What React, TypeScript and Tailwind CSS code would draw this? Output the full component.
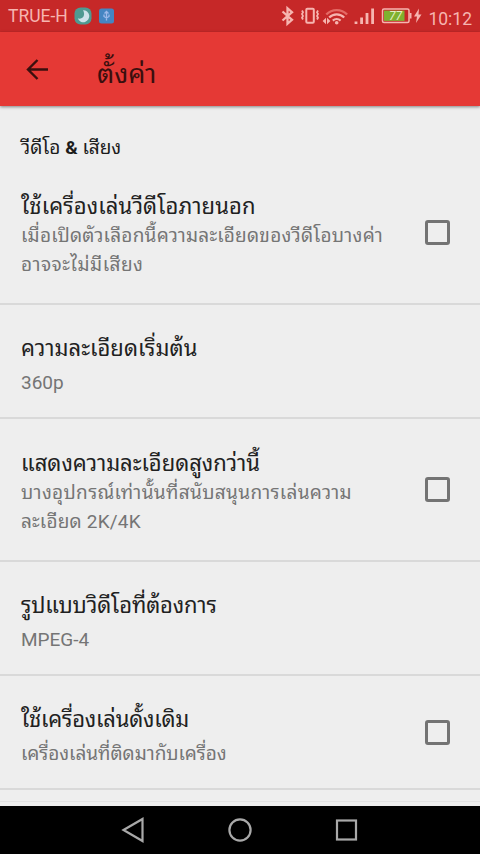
import type { ReactNode } from "react";

type Setting = {
  id: string;
  title: string;
  titleClass: string;
  lines: { text: string; className: string }[];
  checkbox?: boolean;
};

const SETTINGS: Setting[] = [
  {
    id: "external-player",
    title: "ใช้เครื่องเล่นวีดีโอภายนอก",
    titleClass: "tracking-[0.12px]",
    lines: [
      { text: "เมื่อเปิดตัวเลือกนี้ความละเอียดของวีดีโอบางค่า", className: "tracking-[0.22px]" },
      { text: "อาจจะไม่มีเสียง", className: "tracking-[0.5px]" },
    ],
    checkbox: true,
  },
  {
    id: "default-resolution",
    title: "ความละเอียดเริ่มต้น",
    titleClass: "tracking-[0.06px]",
    lines: [{ text: "360p", className: "" }],
  },
  {
    id: "higher-resolution",
    title: "แสดงความละเอียดสูงกว่านี้",
    titleClass: "",
    lines: [
      { text: "บางอุปกรณ์เท่านั้นที่สนับสนุนการเล่นความ", className: "tracking-[0.32px]" },
      { text: "ละเอียด 2K/4K", className: "tracking-[0.2px]" },
    ],
    checkbox: true,
  },
  {
    id: "video-format",
    title: "รูปแบบวิดีโอที่ต้องการ",
    titleClass: "tracking-[-0.12px]",
    lines: [{ text: "MPEG-4", className: "" }],
  },
  {
    id: "legacy-player",
    title: "ใช้เครื่องเล่นดั้งเดิม",
    titleClass: "tracking-[-0.2px]",
    lines: [{ text: "เครื่องเล่นที่ติดมากับเครื่อง", className: "tracking-[-0.05px]" }],
    checkbox: true,
  },
];

function StatusBar() {
  return (
    <div className="flex h-8 items-center bg-[#c62828] text-[#f6b5b0]">
      <span className="ml-2 w-[66px] text-[17.5px] leading-8 whitespace-nowrap">TRUE-H</span>
      <svg className="block" width="42" height="18" viewBox="0 0 42 18">
        <rect x="0.5" y="0.5" width="17" height="17" rx="6" fill="#4f9a91" />
        <path d="M9 3.2A6 6 0 1 1 3.8 11.6C9 12.6 11.8 8 9 3.2z" fill="#cfe3ea" />
        <rect x="25" y="1.5" width="15" height="15" rx="2.5" fill="#4585c2" />
        <path
          d="M32.5 13.5V5M30.5 6.5l2-2 2 2M30 7.5v2l2.5 1.5L35 9.5v-2"
          fill="none"
          stroke="#9db9ea"
          strokeWidth="1.3"
        />
      </svg>
      <svg className="ml-auto block" width="144" height="32" viewBox="0 0 144 32">
        {/* bluetooth */}
        <path d="M4.5 11.5l9.5 8.3-4.5 4V8.2l4.5 4-9.5 8.3" fill="none" stroke="#f6b5b0" strokeWidth="2.3" />
        {/* vibrate */}
        <rect x="28.3" y="8.8" width="7.5" height="14" rx="1" fill="none" stroke="#f6b5b0" strokeWidth="2" />
        <path
          d="M24 10.5l1 1.8-1 1.8 1 1.8-1 1.8 1 1.8M40 10.5l-1 1.8 1 1.8-1 1.8 1 1.8-1 1.8"
          fill="none"
          stroke="#f6b5b0"
          strokeWidth="1.8"
        />
        {/* wifi */}
        <path d="M48.3 14.5a14.5 14.5 0 0 1 20.8 0" fill="none" stroke="#e46a65" strokeWidth="2.4" />
        <path
          d="M51.2 17.6a10.4 10.4 0 0 1 15 0M54.8 20.6a5.8 5.8 0 0 1 7.8 0"
          fill="none"
          stroke="#f6b5b0"
          strokeWidth="2.2"
        />
        <circle cx="58.7" cy="22.8" r="1.8" fill="#f6b5b0" />
        <path d="M44.6 21l3.4-3.2v6.4zM52.4 21L49 17.800v6.400z" fill="#f6b5b0" />
        {/* signal */}
        <path
          d="M78 24v-2.5M83.6 24v-6.5M89 24V13M94.6 24V8.5"
          fill="none"
          stroke="#f6b5b0"
          strokeWidth="2.8"
        />
        {/* battery */}
        <rect x="104.5" y="9" width="26.5" height="13.5" rx="1.5" fill="none" stroke="#f6b5b0" strokeWidth="1.5" />
        <rect x="106" y="10.6" width="20.5" height="10.3" fill="#7fb12f" />
        <path d="M132.5 13v5.5" stroke="#f6b5b0" strokeWidth="2" />
        <text x="117.5" y="20" fontSize="12" fontStyle="italic" textAnchor="middle" fill="#e5efc4">
          77
        </text>
        <path d="M141 8.5l-5 8h3l-1 6.500 5.500-8.500h-3z" fill="#f6b5b0" />
      </svg>
      <span className="mt-1.5 mr-2 ml-[5px] w-[45px] text-right text-[17.5px] leading-7">10:12</span>
    </div>
  );
}

function AppBar() {
  return (
    <header className="relative flex h-[74px] items-center bg-[#e53935] shadow-[0_1px_3px_rgba(0,0,0,0.45)]">
      <button type="button" aria-label="ย้อนกลับ" className="ml-[25px]">
        <svg className="block" width="24" height="24" viewBox="0 0 24 24">
          <path d="M12.5 3L3 12.5 12.5 22M3 12.5H23" fill="none" stroke="#3a0f0e" strokeWidth="2.4" />
        </svg>
      </button>
      <h1 className="mt-2.5 ml-[48px] text-[27px] leading-9 text-[#3a0f0e]">ตั้งค่า</h1>
    </header>
  );
}

function SettingRow({ setting }: { setting: Setting }) {
  const multiline = setting.lines.length > 1;
  return (
    <li
      className={`flex items-center justify-between border-b-2 border-[#d9d9d9] pr-[30px] pl-[21px] ${
        multiline ? "h-[143px]" : "h-[114px]"
      }`}
    >
      <div className={`whitespace-nowrap ${multiline ? "pt-1.5" : "pt-2.5"}`}>
        <h2 className={`text-[22px] leading-[30px] text-[#212121] ${setting.titleClass}`}>{setting.title}</h2>
        <div className={multiline ? "" : "pt-[5px]"}>
          {setting.lines.map((line) => (
            <p key={line.text} className={`text-[19px] leading-[28.5px] text-[#757575] ${line.className}`}>
              {line.text}
            </p>
          ))}
        </div>
      </div>
      {setting.checkbox && (
        <span role="checkbox" aria-checked="false" className="size-[25px] rounded-[3px] border-[3px] border-[#737373]" />
      )}
    </li>
  );
}

function NavButton({ label, children }: { label: string; children: ReactNode }) {
  return (
    <button type="button" aria-label={label}>
      <svg className="block" width="28" height="28" viewBox="0 0 28 28" fill="none" stroke="#a9a9a9" strokeWidth="2.2">
        {children}
      </svg>
    </button>
  );
}

function NavBar() {
  return (
    <nav className="flex h-12 items-center justify-center gap-[79px] bg-black">
      <NavButton label="กลับ">
        <path d="M4.5 14L23.5 3v22z" />
      </NavButton>
      <NavButton label="หน้าหลัก">
        <circle cx="14" cy="14" r="10.6" />
      </NavButton>
      <NavButton label="แอปล่าสุด">
        <rect x="4" y="4.5" width="19" height="19" />
      </NavButton>
    </nav>
  );
}

export default function App() {
  return (
    <div className="flex h-[854px] w-[480px] flex-col overflow-hidden bg-[#eeeeee] font-['Roboto','Noto_Sans_Thai_Looped',sans-serif]">
      <StatusBar />
      <AppBar />
      <main className="min-h-0 flex-1 overflow-hidden">
        <div className="flex h-[56px] items-end pl-[21px]">
          <p className="text-[19px] leading-[29px] whitespace-nowrap text-[#1c1c1c]">
            วีดีโอ <span className="font-bold">&amp;</span> เสียง
          </p>
        </div>
        <ul>
          {SETTINGS.map((setting) => (
            <SettingRow key={setting.id} setting={setting} />
          ))}
        </ul>
        <div className="mt-[11px] h-px bg-[#e2e2e2]" />
      </main>
      <NavBar />
    </div>
  );
}
